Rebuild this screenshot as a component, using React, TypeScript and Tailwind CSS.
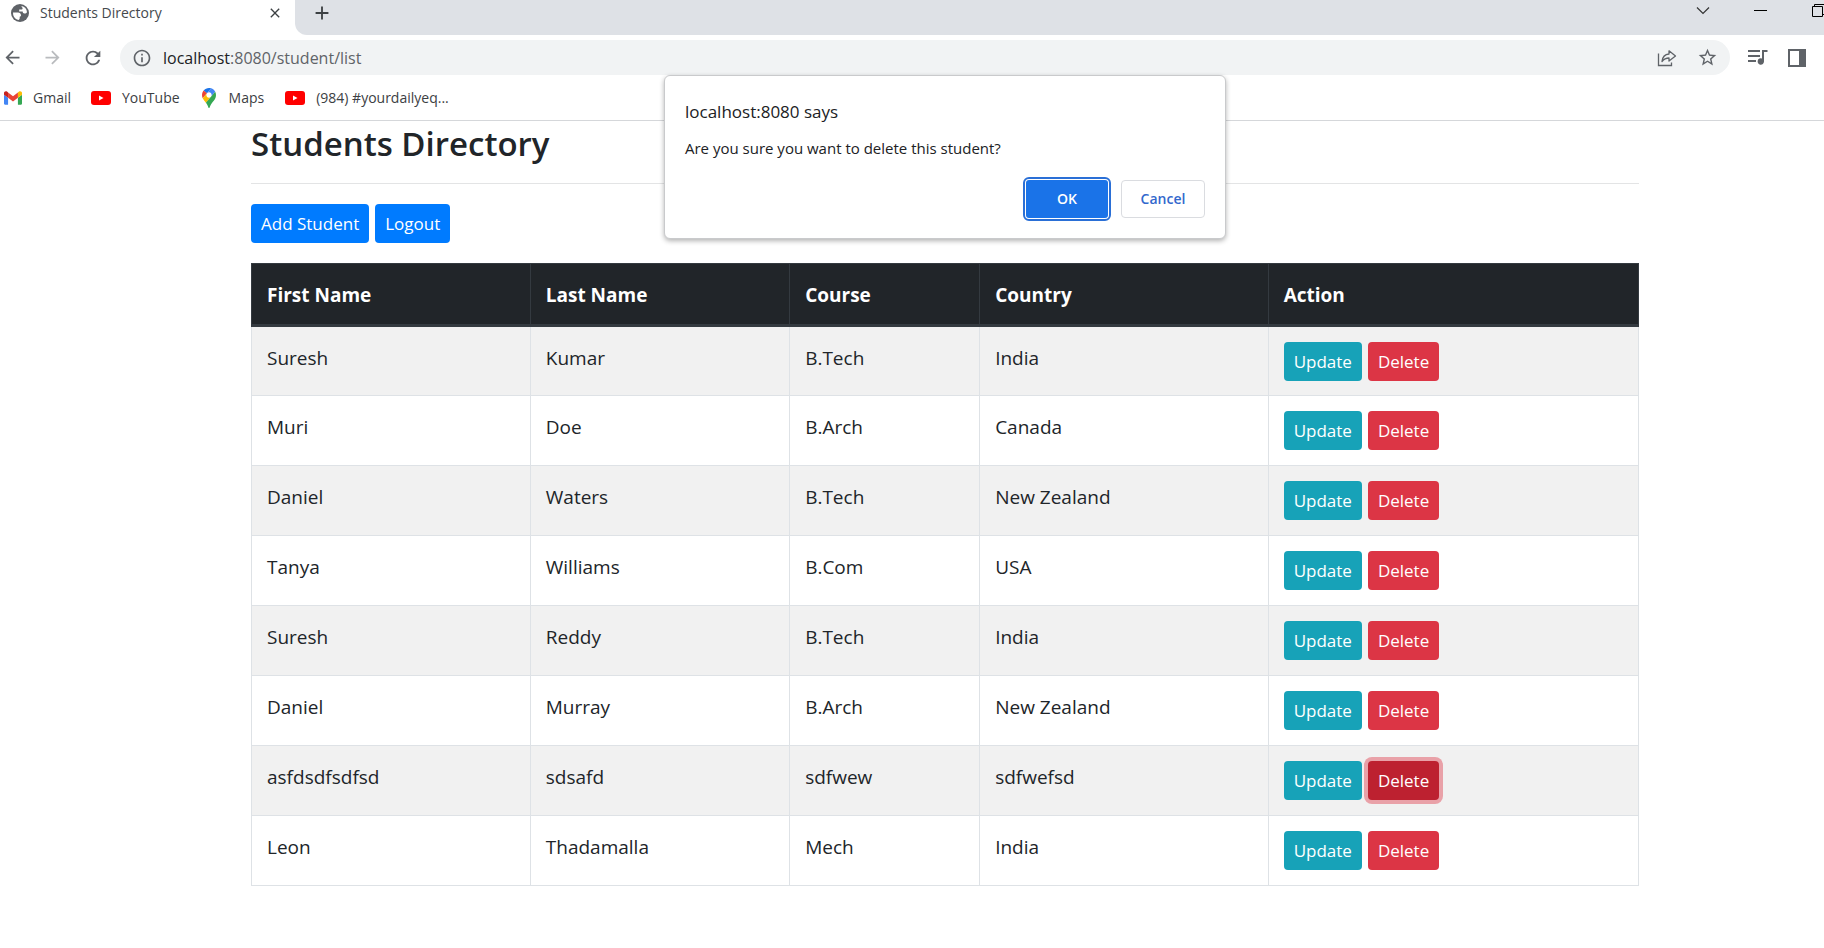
import React from "react";
import {
  MdArrowBack,
  MdArrowForward,
  MdRefresh,
  MdInfoOutline,
  MdStarBorder,
  MdClose,
  MdAdd,
} from "react-icons/md";

type Student = { first: string; last: string; course: string; country: string };

const students: Student[] = [
  { first: "Suresh", last: "Kumar", course: "B.Tech", country: "India" },
  { first: "Muri", last: "Doe", course: "B.Arch", country: "Canada" },
  { first: "Daniel", last: "Waters", course: "B.Tech", country: "New Zealand" },
  { first: "Tanya", last: "Williams", course: "B.Com", country: "USA" },
  { first: "Suresh", last: "Reddy", course: "B.Tech", country: "India" },
  { first: "Daniel", last: "Murray", course: "B.Arch", country: "New Zealand" },
  { first: "asfdsdfsdfsd", last: "sdsafd", course: "sdfwew", country: "sdfwefsd" },
  { first: "Leon", last: "Thadamalla", course: "Mech", country: "India" },
];

const pendingDelete = 6;

function GlobeIcon() {
  return (
    <svg viewBox="0 0 18 18" className="size-[18px]" aria-hidden="true">
      <circle cx="9" cy="9" r="9" fill="#5f6368" />
      <path
        fill="#fff"
        d="M2 8.500h5c1.800 0 3 1.200 3 2.800 0 .8-.5 1.400-1.300 1.400v1.500c0 .8-.6 1.300-1.300 1.700A7.200 7.200 0 0 1 2 8.500zM10.500 2.100a7.100 7.100 0 0 1 5.500 6.100c-.6.800-1.400 1.400-2.500 1.300-1.300 0-1.800-.9-1.800-2H8.200V5.600h2.100c.9 0 1.300-.6 1.300-1.300 0-.8-.6-1-.9-1.300z"
      />
    </svg>
  );
}

function GmailIcon() {
  return (
    <svg viewBox="52 42 88 66" className="h-[14px] w-[18px]" aria-hidden="true">
      <path fill="#4285f4" d="M58 108h14V74L52 59v43c0 3.320 2.690 6 6 6" />
      <path fill="#34a853" d="M120 108h14c3.320 0 6-2.690 6-6V59l-20 15" />
      <path fill="#fbbc04" d="M120 48v26l20-15v-8c0-7.420-8.470-11.650-14.400-7.200" />
      <path fill="#ea4335" d="M72 74V48l24 18 24-18v26L96 92" />
      <path fill="#c5221f" d="M52 51v8l20 15V48l-5.600-4.200c-5.940-4.450-14.400-.22-14.400 7.200" />
    </svg>
  );
}

function YouTubeIcon() {
  return (
    <svg viewBox="0 0 20 14" className="h-[14px] w-5" aria-hidden="true">
      <rect width="20" height="14" rx="3" fill="#f00" />
      <path d="M8 4.500v5l4.500-2.500z" fill="#fff" />
    </svg>
  );
}

function MapsIcon() {
  return (
    <svg viewBox="0 0 92.300 132.300" className="h-5 w-[14px]" aria-hidden="true">
      <path fill="#1a73e8" d="M60.2 2.200C55.8.8 51 0 46.100 0 32 0 19.300 6.400 10.800 16.500l21.800 18.300L60.200 2.200z" />
      <path fill="#ea4335" d="M10.800 16.500C4.100 24.500 0 34.900 0 46.100c0 8.700 1.700 15.700 4.600 22l28-33.300-21.800-18.300z" />
      <path fill="#4285f4" d="M46.200 28.500c9.800 0 17.700 7.900 17.700 17.700 0 4.300-1.600 8.300-4.200 11.400 0 0 13.900-16.600 27.500-32.700-5.600-10.800-15.300-19-27-22.700L32.600 34.800c3.300-3.800 8.100-6.300 13.600-6.300" />
      <path fill="#fbbc04" d="M46.200 63.800c-9.800 0-17.700-7.900-17.700-17.700 0-4.300 1.500-8.300 4.100-11.300l-28 33.300c4.800 10.600 12.800 19.200 21 29.900l34.100-40.500c-3.300 3.900-8.100 6.300-13.500 6.300" />
      <path fill="#34a853" d="M59.100 109.200c15.400-24.100 33.300-35 33.300-63 0-7.700-1.900-14.900-5.200-21.300L25.600 98c2.600 3.400 5.300 7.300 7.900 11.300 9.400 14.500 6.800 23.100 12.800 23.100s3.400-8.700 12.800-23.200" />
    </svg>
  );
}

function ShareIcon() {
  return (
    <svg viewBox="0 0 20 18" className="h-[18px] w-5" fill="none" stroke="#5f6368" strokeWidth="1.300" aria-hidden="true">
      <path d="M1.500 4.500V16.500H14.500V13.500" />
      <path d="M5 12.500C5.500 8 8 5.300 12 5V1.800L18.500 7 12 12V9C9 9 7 10 5 12.500z" strokeLinejoin="round" />
    </svg>
  );
}

function MediaIcon() {
  return (
    <svg viewBox="0 0 20 17" className="h-[17px] w-5" fill="#5f6368" aria-hidden="true">
      <path d="M0 1h12v2H0zM0 6h12v2H0zM0 11h8v2H0z" />
      <path d="M14 1h5.500v2H16v9.500a3.200 3.200 0 1 1-2-3z" />
    </svg>
  );
}

function SidePanelIcon() {
  return (
    <svg viewBox="0 0 18 18" className="size-[18px]" aria-hidden="true">
      <path fill="#5f6368" fillRule="evenodd" d="M0 0h18v18H0zM2 2v14h9V2z" />
    </svg>
  );
}

function BrowserChrome() {
  return (
    <header>
      <div className="flex h-[35px]">
        <div className="flex w-[295px] items-start pl-[11px] pt-[3px]">
          <span className="mt-[1px]"><GlobeIcon /></span>
          <span className="ml-[11px] flex-1 text-sm leading-5 text-[#45494d]">Students Directory</span>
          <button aria-label="Close tab" className="mr-[12px] mt-[2px] text-[#3c4043]">
            <MdClose className="size-4" />
          </button>
        </div>
        <div className="flex flex-1 items-start rounded-bl-[12px] bg-[#dee1e6] pl-[16px]">
          <button aria-label="New tab" className="mt-[2px] text-[#3c4043]">
            <MdAdd className="size-[22px]" />
          </button>
          <div className="-mr-[2px] ml-auto flex items-start gap-[44px] pt-1">
            <button aria-label="Search tabs">
              <svg viewBox="0 0 14 14" className="size-[14px]" fill="none" stroke="#333" strokeWidth="1.200" aria-hidden="true">
                <path d="M1 3.500l6 6 6-6" />
              </svg>
            </button>
            <button aria-label="Minimize">
              <svg viewBox="0 0 14 14" className="size-[14px]" fill="#000" aria-hidden="true">
                <path d="M0 6h13v1H0z" />
              </svg>
            </button>
            <button aria-label="Restore">
              <svg viewBox="0 0 14 14" className="size-[14px]" fill="none" stroke="#000" aria-hidden="true">
                <path d="M.5 2.500h10v10H.5zM2.500 2.500v-2h11v10h-3" />
              </svg>
            </button>
          </div>
        </div>
      </div>

      <div className="flex h-[45px] items-center">
        <div className="flex items-center gap-[19px] pl-[2px] pr-4 text-[#5f6368]">
          <button aria-label="Back"><MdArrowBack className="size-[21px]" /></button>
          <button aria-label="Forward" className="text-[#b9bbbe]"><MdArrowForward className="size-[21px]" /></button>
          <button aria-label="Reload"><MdRefresh className="size-[22px]" /></button>
        </div>
        <div className="flex h-[35px] flex-1 items-center rounded-full bg-[#f1f3f4] px-3 text-[#5f6368]">
          <MdInfoOutline className="size-5" />
          <p className="ml-[11px] flex-1 text-base leading-6">
            <span className="text-[#202124]">localhost</span>:8080/student/list
          </p>
          <button aria-label="Share this page"><ShareIcon /></button>
          <button aria-label="Bookmark this tab" className="ml-5"><MdStarBorder className="size-[21px]" /></button>
        </div>
        <div className="flex items-center gap-5 pl-[18px] pr-[18px]">
          <button aria-label="Media controls"><MediaIcon /></button>
          <button aria-label="Side panel"><SidePanelIcon /></button>
        </div>
      </div>

      <nav aria-label="Bookmarks" className="flex h-[41px] items-center border-b border-[#d5d7da] pb-1 pl-1 text-sm text-[#3c4043]">
        <a href="#gmail" className="flex items-center gap-[11px]"><GmailIcon />Gmail</a>
        <a href="#youtube" className="ml-5 flex items-center gap-[11px]"><YouTubeIcon />YouTube</a>
        <a href="#maps" className="ml-[22px] flex items-center gap-[13px]"><MapsIcon />Maps</a>
        <a href="#video" className="ml-[21px] flex items-center gap-[11px]"><YouTubeIcon />(984) #yourdailyeq...</a>
      </nav>
    </header>
  );
}

function ConfirmDialog() {
  return (
    <div
      role="dialog"
      aria-labelledby="confirm-title"
      className="absolute left-[664px] top-[75px] w-[562px] rounded-md border border-[#c9cacc] bg-white px-5 pb-5 pt-6 text-[#202124] shadow-[0_2px_5px_rgba(0,0,0,0.3)]"
    >
      <h2 id="confirm-title" className="text-[17px] leading-6">localhost:8080 says</h2>
      <p className="mt-3 text-[15px] leading-6">Are you sure you want to delete this student?</p>
      <div className="mt-5 flex justify-end gap-[13px] text-sm font-semibold">
        <button className="h-[38px] w-[82px] rounded-[3px] bg-[#1a73e8] text-white outline-2 outline-offset-1 outline-[#2a6fd6]">OK</button>
        <button className="h-[38px] w-[84px] rounded-[4px] border border-[#dadce0] text-[#3268cd]">Cancel</button>
      </div>
    </div>
  );
}

const button = "h-[39px] rounded-[4px] px-[10px] text-[17px] leading-6 text-white";

export default function App() {
  return (
    <div className="relative bg-white font-['Open_Sans','Noto_Sans',sans-serif]">
      <BrowserChrome />
      <main className="ml-[251px] mr-[185px] text-[19px] text-[#212529]">
        <h1 className="pt-[1px] text-[33px] font-semibold leading-[44px]">Students Directory</h1>
        <hr className="mt-[17px] border-[#e3e4e5]" />
        <div className="mt-5 flex gap-[6px]">
          <button className={`${button} bg-[#007bff]`}>Add Student</button>
          <button className={`${button} bg-[#007bff]`}>Logout</button>
        </div>
        <table className="mt-5 w-full table-fixed border-collapse border border-[#dee2e6] text-left">
          <thead>
            <tr className="h-[62px] bg-[#212529] text-white">
              <th className="w-[20.1%] border border-b-3 border-[#343a40] px-[15px] pt-[2px] font-bold">First Name</th>
              <th className="w-[18.7%] border border-b-3 border-[#343a40] px-[15px] pt-[2px] font-bold">Last Name</th>
              <th className="w-[13.7%] border border-b-3 border-[#343a40] px-[15px] pt-[2px] font-bold">Course</th>
              <th className="w-[20.8%] border border-b-3 border-[#343a40] px-[15px] pt-[2px] font-bold">Country</th>
              <th className="border border-b-3 border-[#343a40] px-[15px] pt-[2px] font-bold">Action</th>
            </tr>
          </thead>
          <tbody>
            {students.map((s, i) => (
              <tr key={i} className="h-[70px] align-top odd:bg-[#f1f1f1]">
                <td className="border border-[#dee2e6] px-[15px] pt-4 leading-[30px]">{s.first}</td>
                <td className="border border-[#dee2e6] px-[15px] pt-4 leading-[30px]">{s.last}</td>
                <td className="border border-[#dee2e6] px-[15px] pt-4 leading-[30px]">{s.course}</td>
                <td className="border border-[#dee2e6] px-[15px] pt-4 leading-[30px]">{s.country}</td>
                <td className="border border-[#dee2e6] px-[15px] pt-[15px]">
                  <div className="flex gap-[6px]">
                    <button className={`${button} bg-[#17a2b8]`}>Update</button>
                    <button
                      className={
                        i === pendingDelete
                          ? `${button} bg-[#bd2130] ring-4 ring-[#e9a1a8]`
                          : `${button} bg-[#dc3545]`
                      }
                    >
                      Delete
                    </button>
                  </div>
                </td>
              </tr>
            ))}
          </tbody>
        </table>
      </main>
      <ConfirmDialog />
    </div>
  );
}
